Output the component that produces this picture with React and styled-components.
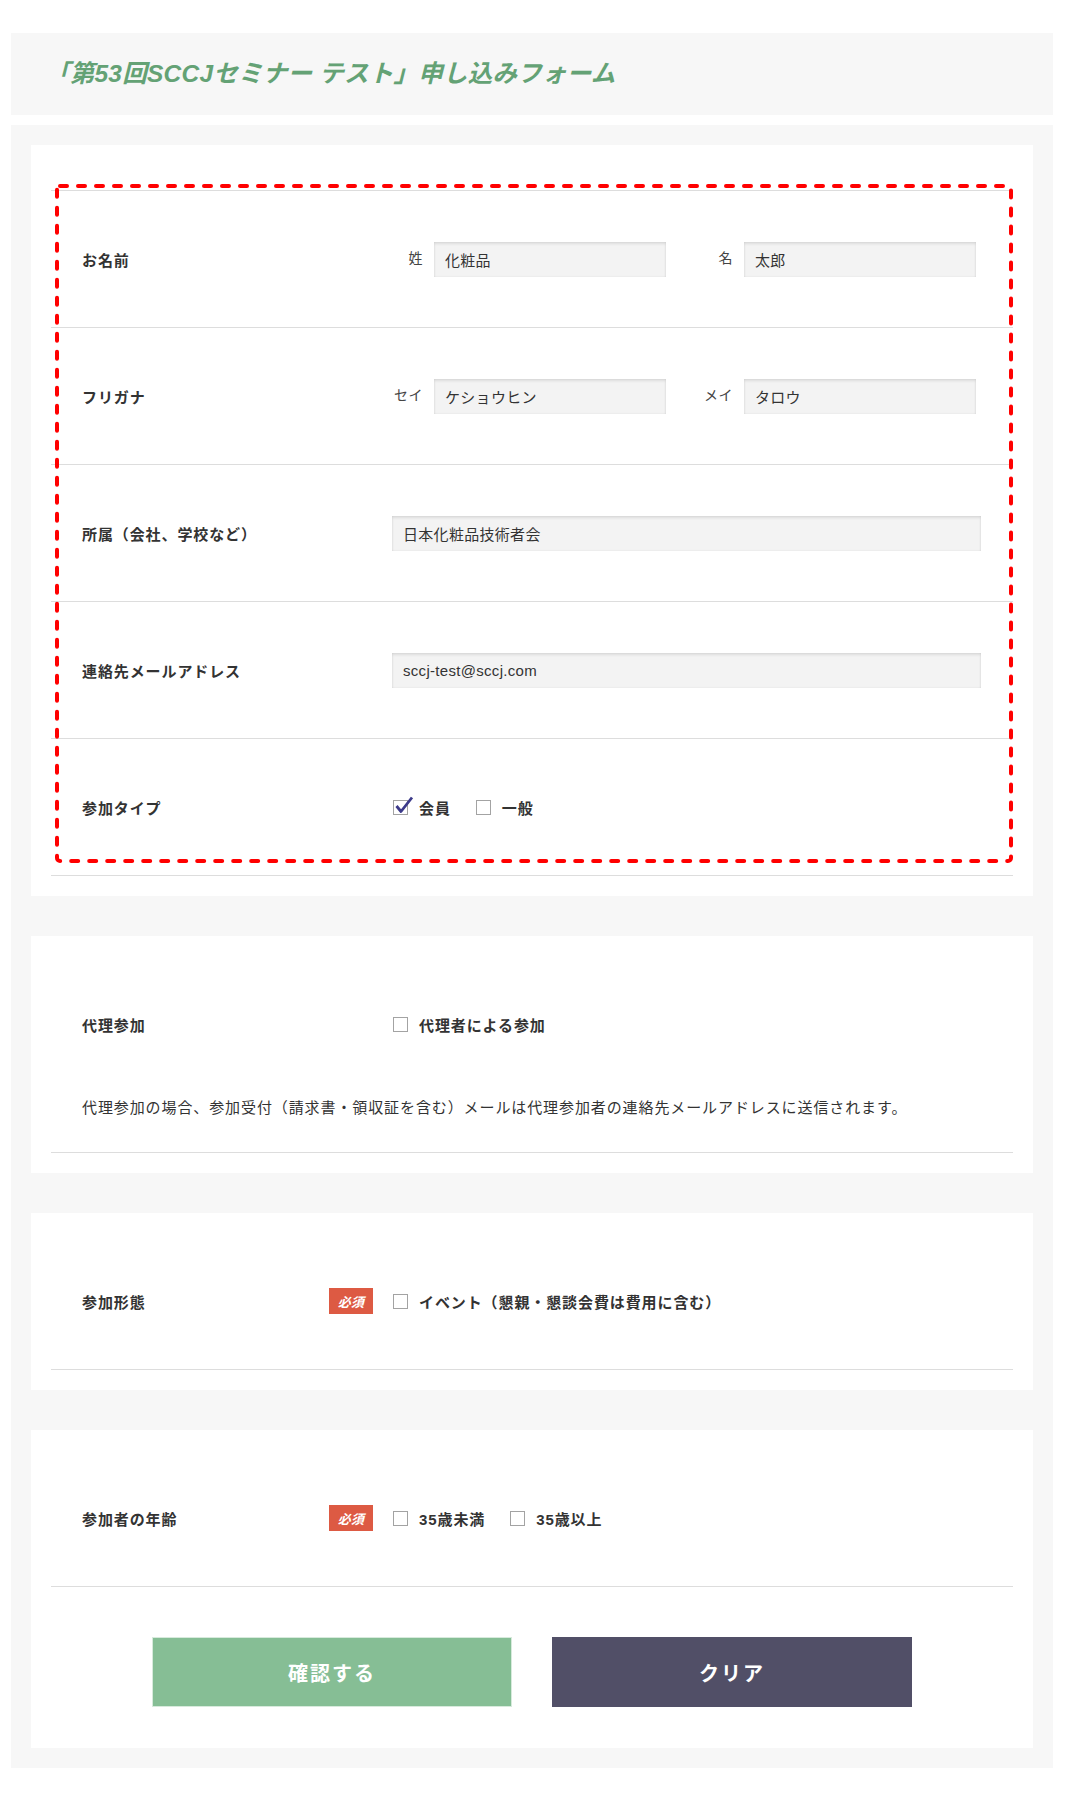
import React from 'react'
import styled, { createGlobalStyle } from 'styled-components'

const Global = createGlobalStyle`
  body {
    margin: 0;
    background: #fff;
    color: #333;
    font-family: "Liberation Sans", "Noto Sans CJK JP", sans-serif;
  }
  * { box-sizing: border-box; }
`

const Page = styled.div`
  width: 1042px;
  margin: 33px 0 30px 11px;
`

const Header = styled.div`
  height: 82px;
  background: #f7f7f7;
  display: flex;
  align-items: center;
  padding-left: 34px;
`

const Title = styled.h1`
  margin: -6px 0 0;
  font-size: 24.5px;
  font-weight: 700;
  font-style: italic;
  color: #64a275;
  letter-spacing: 0.01em;
`

const Body = styled.div`
  margin-top: 10px;
  background: #f7f7f7;
  padding: 20px;
  display: flex;
  flex-direction: column;
  gap: 40px;
`

const Card = styled.section`
  position: relative;
  background: #fff;
  padding: 20px;
`

const Table = styled.div`
  margin-top: ${p => p.top ? '25px' : '0'};
  border-top: ${p => p.top ? '1px solid #ddd' : 'none'};
`

const Row = styled.div`
  display: flex;
  align-items: center;
  height: ${p => p.plain ? '136px' : '137px'};
  padding-left: 31px;
  border-bottom: ${p => p.plain ? 'none' : '1px solid #ddd'};
`

const Label = styled.div`
  width: 310px;
  flex-shrink: 0;
  display: flex;
  align-items: center;
  justify-content: space-between;
  padding-right: 19px;
  font-size: 15px;
  font-weight: 700;
  letter-spacing: 0.06em;
`

const Badge = styled.span`
  width: 44px;
  height: 26px;
  background: #dd5a43;
  color: #fff;
  font-size: 13px;
  font-weight: 700;
  font-style: italic;
  letter-spacing: 0.02em;
  display: flex;
  align-items: center;
  justify-content: center;
`

const Pair = styled.div`
  display: flex;
  align-items: center;
  gap: 36px;
`

const Sub = styled.div`
  display: flex;
  align-items: center;
  gap: 11px;
`

const SubLabel = styled.span`
  width: 31px;
  text-align: right;
  font-size: 14px;
  letter-spacing: 0.04em;
  color: #444;
  margin-top: -5px;
`

const Input = styled.input`
  width: ${p => p.wide ? '589px' : '232px'};
  height: 35px;
  border: none;
  outline: none;
  padding: 0 11px;
  background: #f3f3f3;
  box-shadow: inset 0 2px 3px rgba(0, 0, 0, 0.09), inset 0 0 2px rgba(0, 0, 0, 0.1);
  font-family: "Liberation Sans", "Noto Sans CJK JP", sans-serif;
  font-size: 15px;
  letter-spacing: 0.02em;
  color: #333;
`

const Options = styled.div`
  display: flex;
  align-items: center;
  gap: 25px;
  margin-left: 1px;
`

const Option = styled.label`
  display: flex;
  align-items: center;
  gap: 11px;
  font-size: 15px;
  font-weight: 700;
  letter-spacing: 0.06em;
`

const Box = styled.span`
  position: relative;
  width: 15px;
  height: 15px;
  border: 1px solid #a3a3a3;
  background: #fff;
  flex-shrink: 0;
`

const Tick = styled.svg`
  position: absolute;
  left: 0;
  top: -6px;
`

const Note = styled.p`
  margin: 0;
  padding: 4px 0 32px 31px;
  line-height: 24px;
  font-size: 15px;
  letter-spacing: 0.06em;
  border-bottom: 1px solid #ddd;
`

const Buttons = styled.div`
  display: flex;
  justify-content: center;
  gap: 40px;
  padding: 50px 0 21px;
`

const Button = styled.button`
  width: 360px;
  height: 70px;
  border: ${p => p.primary ? '1px solid #d7eadc' : 'none'};
  background: ${p => p.primary ? '#86be95' : '#514f67'};
  color: #fff;
  font-family: "Liberation Sans", "Noto Sans CJK JP", sans-serif;
  font-size: 20px;
  font-weight: 700;
  letter-spacing: 0.1em;
  cursor: pointer;
`

const Dashed = styled.svg`
  position: absolute;
  left: 24px;
  top: 39px;
  pointer-events: none;
`

const Check = ({ checked, children }) => (
  <Option>
    <Box>
      {checked && (
        <Tick width="20" height="20" viewBox="0 0 20 20">
          <path d="M2.5 11 L7 16.5 L18 2.5" fill="none" stroke="#3c3a8a" strokeWidth="2.8" strokeLinejoin="round" />
        </Tick>
      )}
    </Box>
    {children}
  </Option>
)

const App = () => (
  <Page>
    <Global />
    <Header>
      <Title>「第53回SCCJセミナー テスト」申し込みフォーム</Title>
    </Header>
    <Body>
      <Card>
        <Table top>
          <Row>
            <Label>お名前</Label>
            <Pair>
              <Sub><SubLabel>姓</SubLabel><Input readOnly value="化粧品" /></Sub>
              <Sub><SubLabel>名</SubLabel><Input readOnly value="太郎" /></Sub>
            </Pair>
          </Row>
          <Row>
            <Label>フリガナ</Label>
            <Pair>
              <Sub><SubLabel>セイ</SubLabel><Input readOnly value="ケショウヒン" /></Sub>
              <Sub><SubLabel>メイ</SubLabel><Input readOnly value="タロウ" /></Sub>
            </Pair>
          </Row>
          <Row>
            <Label>所属（会社、学校など）</Label>
            <Input wide readOnly value="日本化粧品技術者会" />
          </Row>
          <Row>
            <Label>連絡先メールアドレス</Label>
            <Input wide readOnly value="sccj-test@sccj.com" />
          </Row>
          <Row>
            <Label>参加タイプ</Label>
            <Options>
              <Check checked>会員</Check>
              <Check>一般</Check>
            </Options>
          </Row>
        </Table>
        <Dashed width="958" height="679" viewBox="0 0 958 679">
          <rect x="2" y="2" width="954" height="675" rx="3" fill="none" stroke="#ff0000" strokeWidth="4" strokeDasharray="7 11" strokeLinecap="round" />
        </Dashed>
      </Card>

      <Card>
        <Row plain>
          <Label>代理参加</Label>
          <Options>
            <Check>代理者による参加</Check>
          </Options>
        </Row>
        <Note>代理参加の場合、参加受付（請求書・領収証を含む）メールは代理参加者の連絡先メールアドレスに送信されます。</Note>
      </Card>

      <Card>
        <Row>
          <Label>参加形態<Badge>必須</Badge></Label>
          <Options>
            <Check>イベント（懇親・懇談会費は費用に含む）</Check>
          </Options>
        </Row>
      </Card>

      <Card>
        <Row>
          <Label>参加者の年齢<Badge>必須</Badge></Label>
          <Options>
            <Check>35歳未満</Check>
            <Check>35歳以上</Check>
          </Options>
        </Row>
        <Buttons>
          <Button primary>確認する</Button>
          <Button>クリア</Button>
        </Buttons>
      </Card>
    </Body>
  </Page>
)

export default App
